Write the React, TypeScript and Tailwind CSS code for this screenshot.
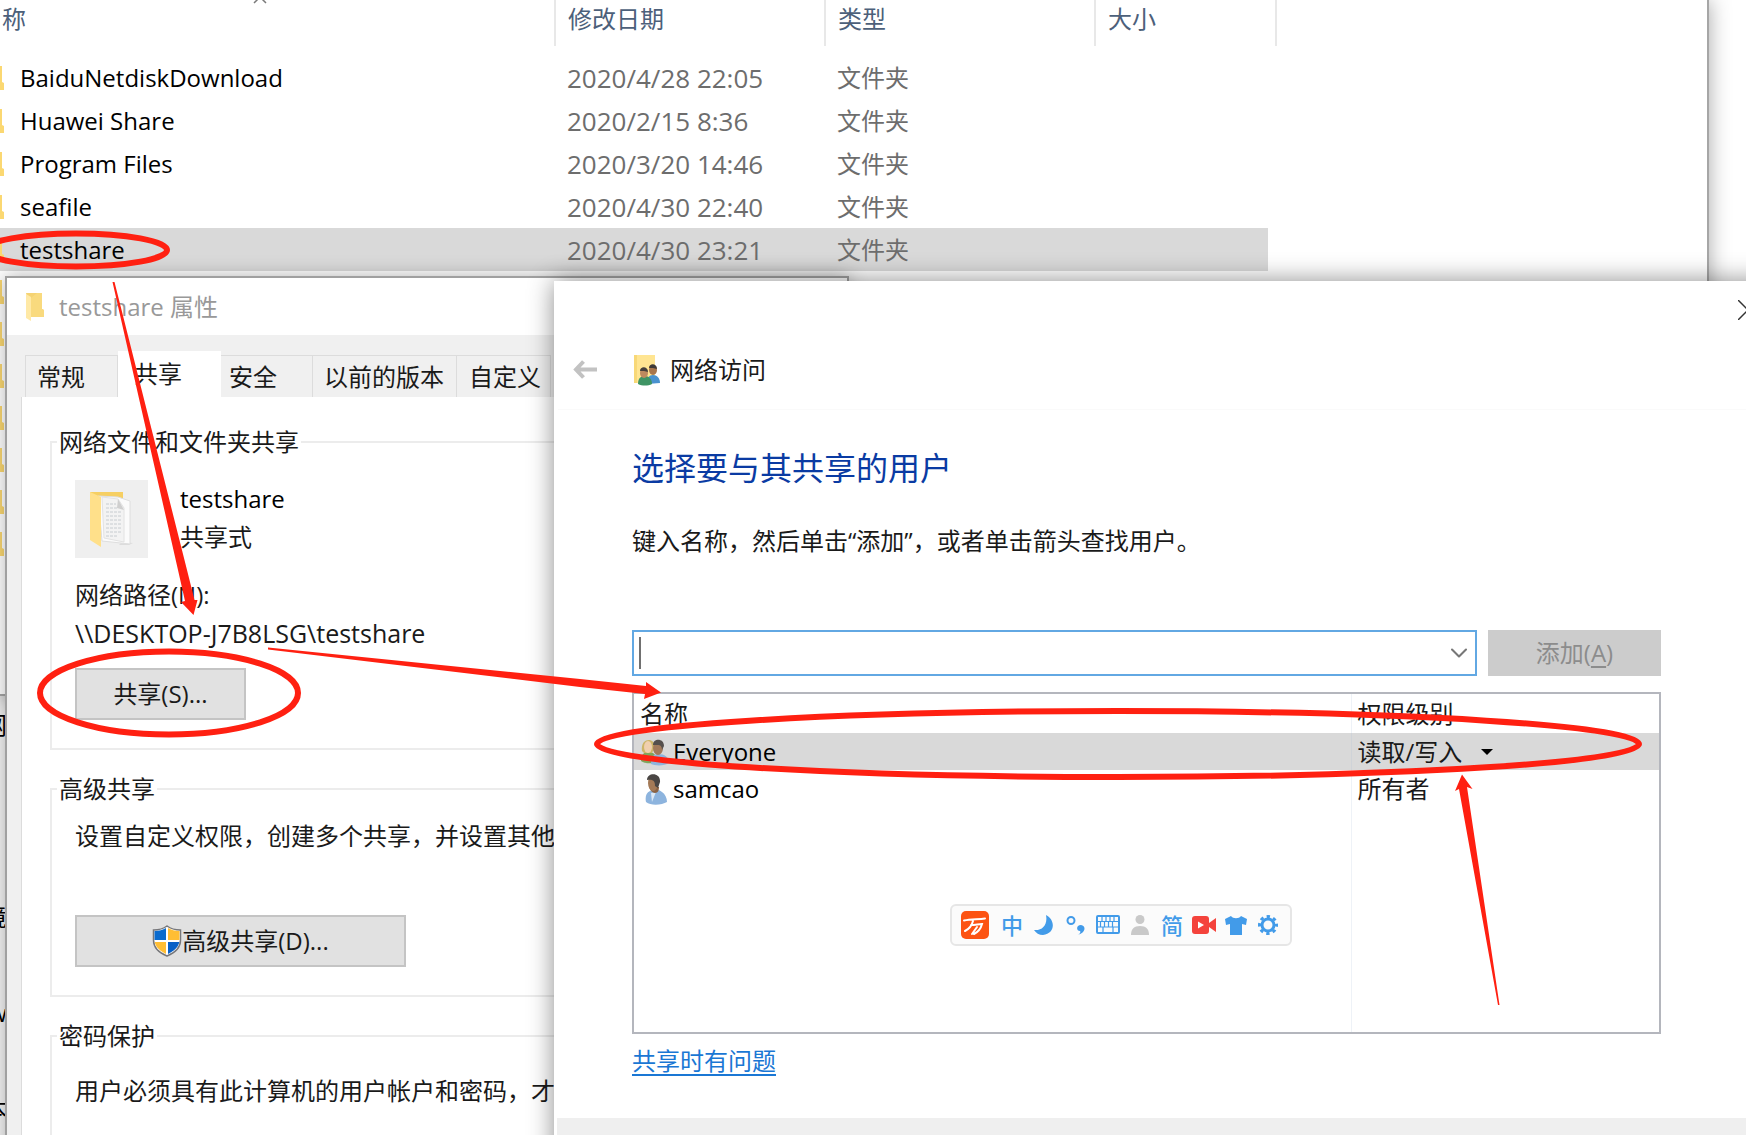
import React from "react";
import { ChevronDown } from "lucide-react";

interface FolderEntry {
  name: string;
  date: string;
  type: string;
  selected?: boolean;
}

const folders: FolderEntry[] = [
  { name: "BaiduNetdiskDownload", date: "2020/4/28 22:05", type: "文件夹" },
  { name: "Huawei Share", date: "2020/2/15 8:36", type: "文件夹" },
  { name: "Program Files", date: "2020/3/20 14:46", type: "文件夹" },
  { name: "seafile", date: "2020/4/30 22:40", type: "文件夹" },
  { name: "testshare", date: "2020/4/30 23:21", type: "文件夹", selected: true },
];

// rows that sit behind the properties window, only their icons peek out
const coveredRows = [1, 2, 3, 4, 5, 6, 7];

const FolderEdge = () => (
  <svg width="4" height="24" viewBox="0 0 4 24" aria-hidden="true">
    <path d="M0 0h2v16l2 1v7H0z" fill="#fbd872" />
  </svg>
);

const BackgroundWindow = () => (
  <div className="absolute left-0 top-[677px] flex w-[7px] flex-col items-end overflow-hidden bg-[#f4f4f4] text-2xl leading-[96px] text-black">
    <span>网</span>
    <span>&nbsp;</span>
    <span>境</span>
    <span>w</span>
    <span>本</span>
  </div>
);

const ExplorerWindow = () => (
  <section className="absolute left-0 right-[37px] top-0 h-[696px] overflow-hidden border-b-2 border-r-2 border-[#a6a6a6] bg-white shadow-[0_0_20px_rgba(0,0,0,0.35)]">
    <svg className="absolute left-[253px] top-0" width="14" height="4" viewBox="0 0 14 4" aria-hidden="true">
      <path d="M1 3 6 -2M13 3 8 -2" stroke="#7a7a7a" strokeWidth="1.5" fill="none" />
    </svg>
    <table className="w-full table-fixed border-collapse text-left">
      <colgroup>
        <col className="w-[555px]" />
        <col className="w-[270px]" />
        <col className="w-[270px]" />
        <col className="w-[173px]" />
        <col className="w-[8px]" />
        <col />
      </colgroup>
      <thead className="text-2xl text-[#4c607a]">
        <tr className="h-[46px]">
          <th className="border-r-2 border-[#e8e8e8] pb-2 pl-0.5 font-normal">称</th>
          <th className="border-r-2 border-[#e8e8e8] pb-2 pl-3 font-normal">修改日期</th>
          <th className="border-r-2 border-[#e8e8e8] pb-2 pl-3 font-normal">类型</th>
          <th className="pb-2 pl-3 font-normal">大小</th>
          <th className="border-r-2 border-[#e8e8e8]"></th>
          <th></th>
        </tr>
      </thead>
      <tbody className="text-2xl text-[#6d6d6d]">
        <tr className="h-[10px]">
          <td colSpan={6}></td>
        </tr>
        {folders.map((f) => (
          <tr key={f.name} className="h-[43px]">
            <td className={f.selected ? "bg-[#d9d9d9]" : ""}>
              <div className="flex items-center gap-4 leading-8 text-black">
                <FolderEdge />
                {f.name}
              </div>
            </td>
            <td className={f.selected ? "bg-[#d9d9d9] pl-3 text-[26px] leading-8" : "pl-3 text-[26px] leading-8"}>{f.date}</td>
            <td className={f.selected ? "bg-[#d9d9d9] pl-3" : "pl-3"}>{f.type}</td>
            <td className={f.selected ? "bg-[#d9d9d9]" : ""}></td>
            <td></td>
            <td></td>
          </tr>
        ))}
        {coveredRows.map((n) => (
          <tr key={n} className="h-[42px]">
            <td colSpan={6}>
              <FolderEdge />
            </td>
          </tr>
        ))}
      </tbody>
    </table>
  </section>
);

const SmallFolder = () => (
  <svg width="20" height="28" viewBox="0 0 20 28" aria-hidden="true">
    <path d="M1 0h16v16l2 1v7H6z" fill="#f5d373" />
    <path d="M12 0h5v16l2 1v7H6V5z" fill="#f9da7e" />
    <path d="M1 1l5 3v24l-5-3z" fill="#ffe9a6" />
  </svg>
);

const DocumentFolder = () => (
  <svg width="46" height="56" viewBox="0 0 46 56" aria-hidden="true">
    <path d="M33 51l11 1-4 2H30z" fill="#dcdcdc" />
    <path d="M1 1h33v45H12z" fill="#f6cf62" />
    <path d="M9 5l20 1 12 4v43l-28-3z" fill="#fbfbfb" stroke="#dedede" />
    <path d="M13 6l16 2 6 9v34l-20-4z" fill="#f3f3f3" stroke="#e2e2e2" />
    <path d="M29 8l6 11-7-2z" fill="#cfcfcf" />
    <g stroke="#c7ccd0" strokeWidth="1" strokeDasharray="3 1">
      <path d="M17 13h10M17 17h11M17 21h15M17 25h15M17 29h15M17 33h15M17 37h15M17 41h15M17 45h12" />
    </g>
    <path d="M1 1l11 5v50L1 49z" fill="#ffe08a" />
  </svg>
);

const UacShield = () => (
  <svg width="30" height="32" viewBox="0 0 30 32" aria-hidden="true">
    <path d="M15 1c4 3 8 4 13.500 4v10c0 8-6 13-13.500 16C7.500 28 1.500 23 1.500 15V5C7 5 11 4 15 1z" fill="#fff" stroke="#77777a" strokeWidth="1.500" />
    <path d="M14 3v12H2.500V6C7 6 11 5 14 3z" fill="#0a6bce" />
    <path d="M16 3v12h11.500V6C23 6 19 5 16 3z" fill="#ffbe35" />
    <path d="M14 17v12C8 26 3.500 22 2.700 17z" fill="#ffbe35" />
    <path d="M16 17v12c6-3 10.500-7 11.300-12z" fill="#0860c6" />
  </svg>
);

const PropertiesWindow = () => (
  <section className="absolute -bottom-10 left-[5px] top-[276px] flex w-[844px] flex-col overflow-hidden border-2 border-[#a0a0a0] bg-[#f0f0f0] text-2xl text-[#1a1a1a] shadow-[0_0_18px_rgba(0,0,0,0.3)]">
    <header className="flex h-[57px] shrink-0 items-center gap-[14px] bg-white pl-[18px] text-[#999]">
      <SmallFolder />
      <h2 className="leading-8">testshare 属性</h2>
    </header>
    <div className="flex shrink-0 items-end whitespace-nowrap pl-[18px] pt-4" role="tablist">
      <button role="tab" className="h-[42px] w-[93px] border border-b-0 border-[#dcdcdc] pl-[11px] text-left">常规</button>
      <button role="tab" aria-selected="true" className="h-[46px] w-[103px] bg-white pl-4 text-left">共享</button>
      <button role="tab" className="h-[42px] w-[92px] border border-b-0 border-l-0 border-[#dcdcdc] pl-[8px] text-left">安全</button>
      <button role="tab" className="h-[42px] w-[144px] border border-b-0 border-l-0 border-[#dcdcdc] pl-[11px] text-left">以前的版本</button>
      <button role="tab" className="h-[42px] w-[94px] border border-b-0 border-l-0 border-[#dcdcdc] pl-[12px] text-left">自定义</button>
    </div>
    <div className="ml-[14px] flex grow flex-col gap-[23px] border-l border-[#dcdcdc] bg-white pl-7 pt-[29px]">
      <fieldset className="border-2 border-[#ececec] pb-7 pl-[23px]">
        <legend className="-ml-[18px] px-[2px] leading-8">网络文件和文件夹共享</legend>
        <div className="flex items-start gap-8 pt-[22px]">
          <div className="flex h-[78px] w-[73px] items-center justify-center bg-[#efefef]">
            <DocumentFolder />
          </div>
          <div className="leading-[38px]">
            <p className="text-black">testshare</p>
            <p>共享式</p>
          </div>
        </div>
        <p className="mt-[18px] leading-[38px]">网络路径(N):</p>
        <p className="text-[25px] leading-[38px]">\\DESKTOP-J7B8LSG\testshare</p>
        <button className="mt-4 h-[52px] w-[171px] border-2 border-[#c4c4c4] bg-[#e1e1e1]">共享(S)...</button>
      </fieldset>
      <fieldset className="border-2 border-[#ececec] pb-7 pl-[23px]">
        <legend className="-ml-[18px] px-[2px] leading-8">高级共享</legend>
        <p className="whitespace-nowrap pt-3 leading-[38px]">设置自定义权限，创建多个共享，并设置其他高级共享选项。</p>
        <button className="mt-[60px] flex h-[52px] w-[331px] items-center justify-center border-2 border-[#c4c4c4] bg-[#e1e1e1]">
          <UacShield />
          高级共享(D)...
        </button>
      </fieldset>
      <fieldset className="border-2 border-[#ececec] pb-7 pl-[23px]">
        <legend className="-ml-[18px] px-[2px] leading-8">密码保护</legend>
        <p className="whitespace-nowrap pt-5 leading-[38px]">用户必须具有此计算机的用户帐户和密码，才能访问共享文件夹。</p>
      </fieldset>
    </div>
  </section>
);

const NetworkAccessIcon = () => (
  <svg width="28" height="32" viewBox="0 0 28 32" aria-hidden="true">
    <path d="M1 1h21v28H1z" fill="#ffe592" />
    <path d="M1 1h3v28H1z" fill="#f8d877" />
    <path d="M14 30c0-6 2-9 6-9s7 3 7 8z" fill="#4a92cf" />
    <ellipse cx="20" cy="16" rx="4" ry="5" fill="#a9764c" />
    <path d="M16 14c0-5 8-5 8 1l-4-1z" fill="#3f3a38" />
    <path d="M5 30c0-6 3-8 7-8s7 3 7 8c-4 2-10 2-14 0z" fill="#3f9464" />
    <ellipse cx="11" cy="19" rx="4" ry="5" fill="#bd8a5f" />
    <path d="M7 17c0-5 8-5 8 1l-4-1z" fill="#46403c" />
  </svg>
);

const UserIcon = () => (
  <svg width="26" height="32" viewBox="0 0 26 32" aria-hidden="true">
    <path d="M3 29c-1-5 0-9 4-11 4-3 9-2 12 1 3 2 5 6 5 10-5 3-16 4-21 0z" fill="#8db4de" />
    <path d="M8 20l1 9 4-10z" fill="#dbe8f5" />
    <path d="M6 13c1 4 3 7 6 7s4-3 4-6z" fill="#8a6243" />
    <ellipse cx="10" cy="10" rx="5" ry="8" fill="#a47a57" />
    <path d="M4 7C4-1 18-1 17 9l-2 6-3-2c0-4-1-7-8-6z" fill="#4a4644" />
  </svg>
);

const GroupIcon = () => (
  <svg width="30" height="28" viewBox="0 0 30 28" aria-hidden="true">
    <path d="M1 23c0-7 3-9 8-9s8 4 8 9c-4 3-12 3-16 0z" fill="#7fa65c" />
    <path d="M2 13C0-1 15-1 15 9l-3 6H4z" fill="#cdb568" />
    <ellipse cx="8" cy="9" rx="4" ry="6" fill="#f0cfae" />
    <path d="M11 26c0-8 3-10 8-10s10 3 10 9c-4 3-14 3-18 1z" fill="#8db4de" />
    <ellipse cx="18" cy="10" rx="5" ry="7" fill="#a27a5b" />
    <path d="M13 7c0-7 11-7 11 1l-2 4c0-4-2-5-4-5z" fill="#55504d" />
  </svg>
);

const ShareDialog = () => (
  <section className="absolute -bottom-[60px] -right-[60px] left-[554px] top-[281px] flex flex-col bg-white text-2xl text-[#1a1a1a] shadow-[0_0_24px_rgba(0,0,0,0.45)]">
    <div className="flex h-[58px] shrink-0 items-center justify-end pr-12">
      <button aria-label="关闭">
        <svg width="20" height="20" viewBox="0 0 20 20" aria-hidden="true">
          <path d="M0 0l20 20M20 0L0 20" stroke="#333" strokeWidth="1.500" />
        </svg>
      </button>
    </div>
    <div className="flex h-[62px] shrink-0 items-center pl-[19px]">
      <button aria-label="返回" className="mr-[34px] text-[#c2c2c2]">
        <svg width="26" height="20" viewBox="0 0 26 20" aria-hidden="true">
          <path d="M10.500 1.500L3 9.500l7.500 8M3 9.500h21" stroke="currentColor" strokeWidth="4" fill="none" />
        </svg>
      </button>
      <NetworkAccessIcon />
      <h2 className="ml-[9px] leading-8">网络访问</h2>
    </div>
    <div className="ml-1 mt-2 border-t border-[#fafafa]"></div>
    <div className="flex flex-col pl-[78px] pr-[145px]">
      <h1 className="mt-9 text-[32px] leading-[44px] text-[#0a3ba3]">选择要与其共享的用户</h1>
      <label htmlFor="user" className="mt-8 leading-[38px]">
        键入名称，然后单击“添加”，或者单击箭头查找用户。
      </label>
      <div className="mt-[70px] flex gap-[11px]">
        <div className="flex h-[46px] flex-1 items-center border-2 border-[#62a8e3] pl-[5px] pr-0.5">
          <span className="h-8 w-0.5 bg-[#707070]"></span>
          <input id="user" type="text" className="h-full min-w-0 flex-1 outline-none" />
          <button aria-label="展开">
            <ChevronDown className="h-7 w-7 text-[#777]" strokeWidth={1.8} />
          </button>
        </div>
        <button className="h-[46px] w-[173px] bg-[#ccc] text-[#8c8c8c]" disabled>
          添加(<span className="underline underline-offset-4">A</span>)
        </button>
      </div>
      <div className="mt-4 h-[342px] border-2 border-[#b4b6bd]">
        <table className="h-full w-full table-fixed border-collapse text-left">
          <colgroup>
            <col />
            <col className="w-[308px]" />
          </colgroup>
          <thead>
            <tr className="h-[39px]">
              <th className="pl-1.5 font-normal leading-8">名称</th>
              <th className="border-l border-[#eef2f7] pl-1.5 font-normal leading-8">权限级别</th>
            </tr>
          </thead>
          <tbody>
            <tr className="h-[37px] bg-[#d9d9d9]">
              <td className="pl-1.5">
                <div className="flex items-center gap-[3px] leading-8 text-black">
                  <GroupIcon />
                  Everyone
                </div>
              </td>
              <td className="border-l border-[#cfd3d8] pl-1.5">
                <div className="flex items-center gap-[18px] leading-8">
                  <select aria-label="权限级别" className="appearance-none">
                    <option>读取/写入</option>
                  </select>
                  <svg width="12" height="6" viewBox="0 0 12 6" aria-hidden="true">
                    <path d="M0 0h12L6 6z" fill="#000" />
                  </svg>
                </div>
              </td>
            </tr>
            <tr className="h-[38px]">
              <td className="pl-[9px]">
                <div className="flex items-center gap-1 leading-8 text-black">
                  <UserIcon />
                  samcao
                </div>
              </td>
              <td className="border-l border-[#eef2f7] pl-1.5 leading-8">所有者</td>
            </tr>
            <tr>
              <td></td>
              <td className="border-l border-[#eef2f7]"></td>
            </tr>
          </tbody>
        </table>
      </div>
      <a href="#help" className="mt-2 self-start leading-[38px] text-[#1a77d4] underline decoration-2 underline-offset-4">
        共享时有问题
      </a>
    </div>
    <footer className="ml-[3px] mt-auto h-[77px] bg-[#efefef]"></footer>
  </section>
);

// floating toolbar of the input method
const InputMethodBar = () => (
  <div className="absolute left-[950px] top-[904px] flex h-[42px] items-center rounded-md border-2 border-[#e6e6e6] bg-[#fbfbfb] pl-[9px] pr-1.5 text-[#429be9]">
    <svg className="mr-[7px]" width="28" height="28" viewBox="0 0 28 28" aria-hidden="true">
      <rect width="28" height="28" rx="5" fill="#fc5312" />
      <path d="M3 9.500c7-1.500 14-1 21-2M12 10c-1 4-4 8-8 10M10 14c4 0 8-1 11-1-1 4-4 8-8 10M16 16l-5 7" stroke="#fff" strokeWidth="2" fill="none" strokeLinecap="round" />
    </svg>
    <span className="w-8 text-center text-[22px] font-medium leading-8">中</span>
    <span className="flex w-8 justify-center">
      <svg width="20" height="20" viewBox="0 0 20 20" aria-hidden="true">
        <path d="M12 0c10 5 9 19-3 20-4 0-7-2-9-5C8 16 14 10 12 0z" fill="currentColor" />
      </svg>
    </span>
    <span className="flex w-8 justify-center">
      <svg width="20" height="20" viewBox="0 0 20 20" aria-hidden="true">
        <circle cx="5" cy="5.500" r="3.500" stroke="currentColor" strokeWidth="2" fill="none" />
        <path d="M11 20c3-1 4-3 3-4-4 0-4-6 1-6 6 1 4 9-4 10z" fill="currentColor" />
      </svg>
    </span>
    <span className="flex w-8 justify-center">
      <svg width="24" height="20" viewBox="0 0 24 20" aria-hidden="true">
        <rect x="1" y="1" width="22" height="17" rx="1" stroke="currentColor" strokeWidth="2" fill="none" />
        <path d="M2 6.500h20M2 12h20M6 1v5.500M10 1v5.500M14 1v5.500M18 1v5.500M4.500 6.500V12M8.500 6.500V12M12.500 6.500V12M16.500 6.500V12M7 12v6M17 12v6" stroke="currentColor" strokeWidth="1.200" />
      </svg>
    </span>
    <span className="flex w-8 justify-center">
      <svg width="18" height="20" viewBox="0 0 18 20" aria-hidden="true">
        <circle cx="9" cy="4.500" r="4.500" fill="#c9c9c9" />
        <path d="M0 20c0-6 3-9 9-9s9 3 9 9z" fill="#c9c9c9" />
      </svg>
    </span>
    <span className="w-8 text-center text-[22px] font-medium leading-8">简</span>
    <span className="flex w-8 justify-center">
      <svg width="24" height="18" viewBox="0 0 24 18" aria-hidden="true">
        <rect width="17" height="18" rx="3" fill="#f4433c" />
        <path d="M17 7l7-5v14l-7-5z" fill="#f4433c" />
        <path d="M6 5.500v7L12 9z" fill="#fff" />
      </svg>
    </span>
    <span className="flex w-8 justify-center">
      <svg width="22" height="19" viewBox="0 0 22 19" aria-hidden="true">
        <path d="M0 3l6-3c2 3 8 3 10 0l6 3-1 6-4-1v11H5V8L1 9z" fill="currentColor" />
      </svg>
    </span>
    <span className="flex w-8 justify-center">
      <svg width="22" height="22" viewBox="0 0 22 22" aria-hidden="true">
        <circle cx="11" cy="11" r="6" stroke="currentColor" strokeWidth="3" fill="none" />
        <circle cx="11" cy="11" r="8.500" stroke="currentColor" strokeWidth="3" strokeDasharray="3.340 3.340" strokeDashoffset="1.670" fill="none" />
      </svg>
    </span>
  </div>
);

const Annotations = () => (
  <svg className="pointer-events-none absolute left-0 top-0" width="1746" height="1135" viewBox="0 0 1746 1135" aria-hidden="true">
    <g fill="none" stroke="#ff2011" strokeWidth="6">
      <ellipse cx="76" cy="250" rx="91" ry="16.500" />
      <ellipse cx="169" cy="693" rx="129" ry="41.500" />
      <ellipse cx="1118" cy="744" rx="521" ry="33" />
    </g>
    <g fill="#ff2011">
      <path d="M112.500 282h2L187 570l7.500 30h3L193.500 615 181 602l4-1-7-31z" />
      <path d="M268 647.500l312 31.500 66 7v-4l15 10.500-17 6.500 1-5-65-7-312-37.500z" />
      <path d="M1498 1005l-39-216-4 2 7-16.500 10.500 14.500-5.500-2 32.500 218z" />
    </g>
  </svg>
);

const App = () => {
  return (
    <main className="relative h-screen overflow-hidden bg-white font-['Open_Sans','Noto_Sans_CJK_SC',sans-serif]">
      <BackgroundWindow />
      <ExplorerWindow />
      <PropertiesWindow />
      <ShareDialog />
      <InputMethodBar />
      <Annotations />
    </main>
  );
};

export default App;
